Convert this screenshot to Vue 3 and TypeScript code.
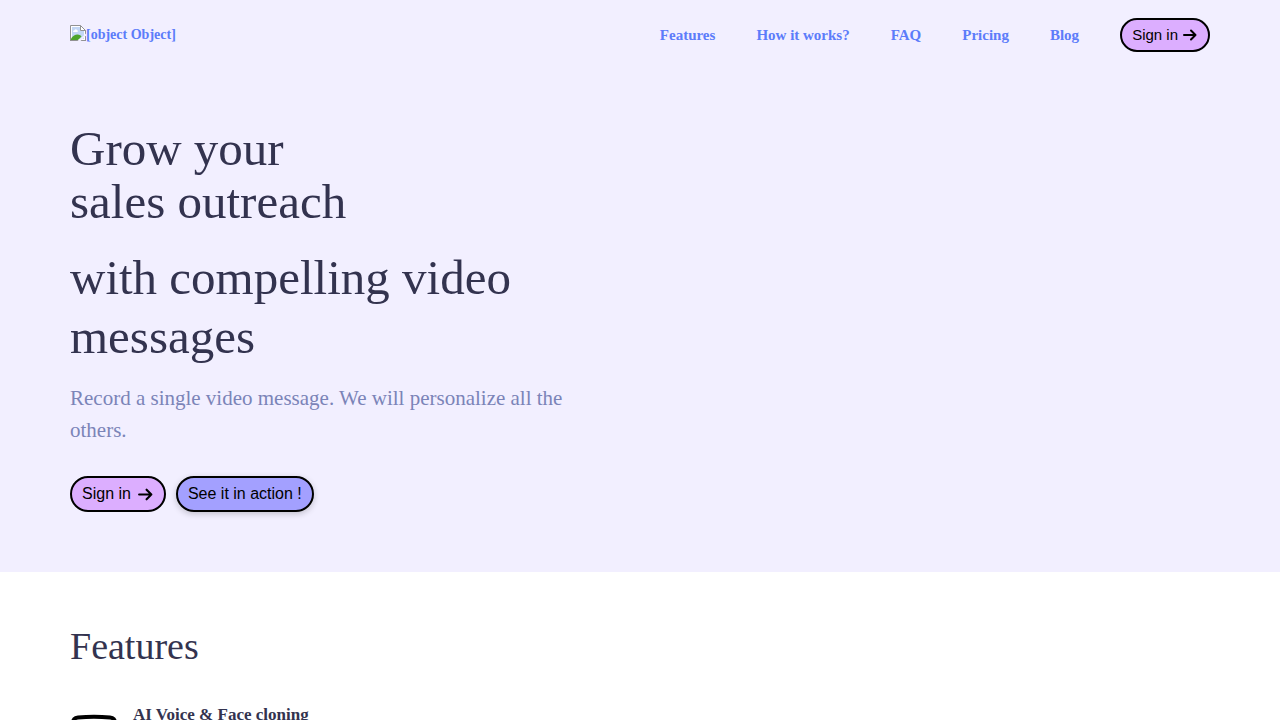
<script setup lang="ts">
interface NavLink {
  label: string
  href: string
}

const links: NavLink[] = [
  { label: 'Features', href: '#features' },
  { label: 'How it works?', href: '#how-it-works' },
  { label: 'FAQ', href: '#faq' },
  { label: 'Pricing', href: '#pricing' },
  { label: 'Blog', href: '#blog' },
]
</script>

<template>
  <div class="page">
    <div class="intro">
      <header class="container topbar">
        <a class="brand" href="#">
          <svg class="brand-icon" viewBox="0 0 16 16" aria-hidden="true">
            <path d="M.5.5h10l5 5v10H.5z" fill="#fff" />
            <path d="M2 2h8.500v4H14v8H2z" fill="#c3d7f5" />
            <path d="M3 7c0-1.200.8-1.700 1.500-1.700.4-1.300 2.200-1.300 2.600 0C8.300 5.300 8.300 7 7 7z" fill="#fff" />
            <path d="M1 15v-1.500C3 11 5 9.500 7.500 9.500c2 0 3.500 1 4 2L8 15z" fill="#4ea52b" />
            <path d="M.5 16V.5h10l5 5V16M.5 15.500h15" fill="none" stroke="#929292" />
            <path d="M10.500.5v5h5z" fill="#fff" stroke="#929292" />
            <path d="M16 8.500v2L10.500 16H7.500z" fill="#f2efff" />
          </svg>
          <span>[object Object]</span>
        </a>
        <nav class="nav" aria-label="Main">
          <a v-for="link in links" :key="link.label" class="nav-link" :href="link.href">{{ link.label }}</a>
          <button class="pill pill-small" type="button">
            Sign in
            <svg class="arrow" viewBox="0 0 16 16" aria-hidden="true">
              <path d="M2 8h11.500M9 3.500L13.500 8 9 12.500" />
            </svg>
          </button>
        </nav>
      </header>

      <section class="container hero">
        <div class="hero-copy">
          <h1 class="title">Grow your<br />sales outreach</h1>
          <p class="title-rest">with compelling video messages</p>
          <p class="lead">Record a single video message. We will personalize all the others.</p>
          <div class="actions">
            <button class="pill" type="button">
              Sign in
              <svg class="arrow" viewBox="0 0 16 16" aria-hidden="true">
                <path d="M2 8h11.500M9 3.500L13.500 8 9 12.500" />
              </svg>
            </button>
            <button class="pill pill-blue" type="button">See it in action !</button>
          </div>
        </div>
      </section>
    </div>

    <section id="features" class="container features">
      <h2 class="section-title">Features</h2>
      <article class="feature">
        <svg class="feature-icon" viewBox="0 0 48 48" aria-hidden="true">
          <path d="M3 14V9q0-5 5-5.500Q24 2 40 3.500q5 .5 5 5.500v30q0 5-5 5.500-16 1.500-32 0-5-.5-5-5.500z" />
        </svg>
        <h3 class="feature-title">AI Voice &amp; Face cloning</h3>
      </article>
    </section>
  </div>
</template>

<style>
body {
  margin: 0;
  background: #fff;
}

html {
  scrollbar-width: none;
}
</style>

<style scoped>
.page {
  min-height: 100vh;
  color: #33334f;
  font-family: "Liberation Serif", "Times New Roman", serif;
}

.container {
  box-sizing: border-box;
  width: 100%;
  max-width: 1180px;
  margin: 0 auto;
  padding: 0 20px;
}

.intro {
  background: #f2efff;
  padding-bottom: 60px;
}

.topbar {
  display: flex;
  align-items: center;
  justify-content: space-between;
  height: 70px;
}

.brand {
  display: flex;
  align-items: flex-end;
  color: #5c7cfa;
  font-size: 14px;
  font-weight: 700;
  line-height: 20px;
  text-decoration: none;
}

.brand-icon {
  width: 16px;
  height: 16px;
  margin-bottom: 4px;
}

.nav {
  display: flex;
  align-items: center;
  gap: 41px;
}

.nav-link {
  color: #5c7cfa;
  font-size: 15px;
  font-weight: 700;
  line-height: 20px;
  text-decoration: none;
}

.pill {
  display: flex;
  align-items: center;
  gap: 6px;
  box-sizing: border-box;
  height: 36px;
  padding: 0 10px;
  border: 2px solid #000;
  border-radius: 18px;
  background: #dcaeff;
  color: #000;
  font-family: "Liberation Sans", Arial, sans-serif;
  font-size: 16px;
  line-height: 20px;
  cursor: pointer;
}

.pill-small {
  gap: 4px;
  height: 34px;
  font-size: 15px;
}

.pill-blue {
  background: #a3a0ff;
  box-shadow: 0 2px 6px rgba(0, 0, 0, 0.2);
}

.arrow {
  width: 17px;
  height: 17px;
  fill: none;
  stroke: #000;
  stroke-width: 2;
  stroke-linecap: round;
  stroke-linejoin: round;
}

.pill-small .arrow {
  width: 16px;
  height: 16px;
}

.hero {
  padding-top: 52px;
}

.hero-copy {
  max-width: 510px;
}

.title,
.title-rest,
.lead,
.section-title,
.feature-title {
  margin: 0;
  font-weight: 400;
}

.title {
  font-size: 49px;
  line-height: 53px;
}

.title-rest {
  margin-top: 20px;
  font-size: 49px;
  line-height: 59px;
}

.lead {
  margin-top: 16px;
  color: #7b84b8;
  font-size: 21px;
  line-height: 32px;
}

.actions {
  display: flex;
  gap: 10px;
  margin-top: 30px;
}

.features {
  padding-top: 50px;
}

.section-title {
  font-size: 38px;
  line-height: 48px;
}

.feature {
  display: flex;
  gap: 15px;
  margin-top: 35px;
}

.feature-icon {
  width: 48px;
  height: 48px;
  margin-top: 9px;
  fill: none;
  stroke: #000;
  stroke-width: 4;
}

.feature-title {
  font-size: 17px;
  font-weight: 700;
  line-height: 20px;
}
</style>
